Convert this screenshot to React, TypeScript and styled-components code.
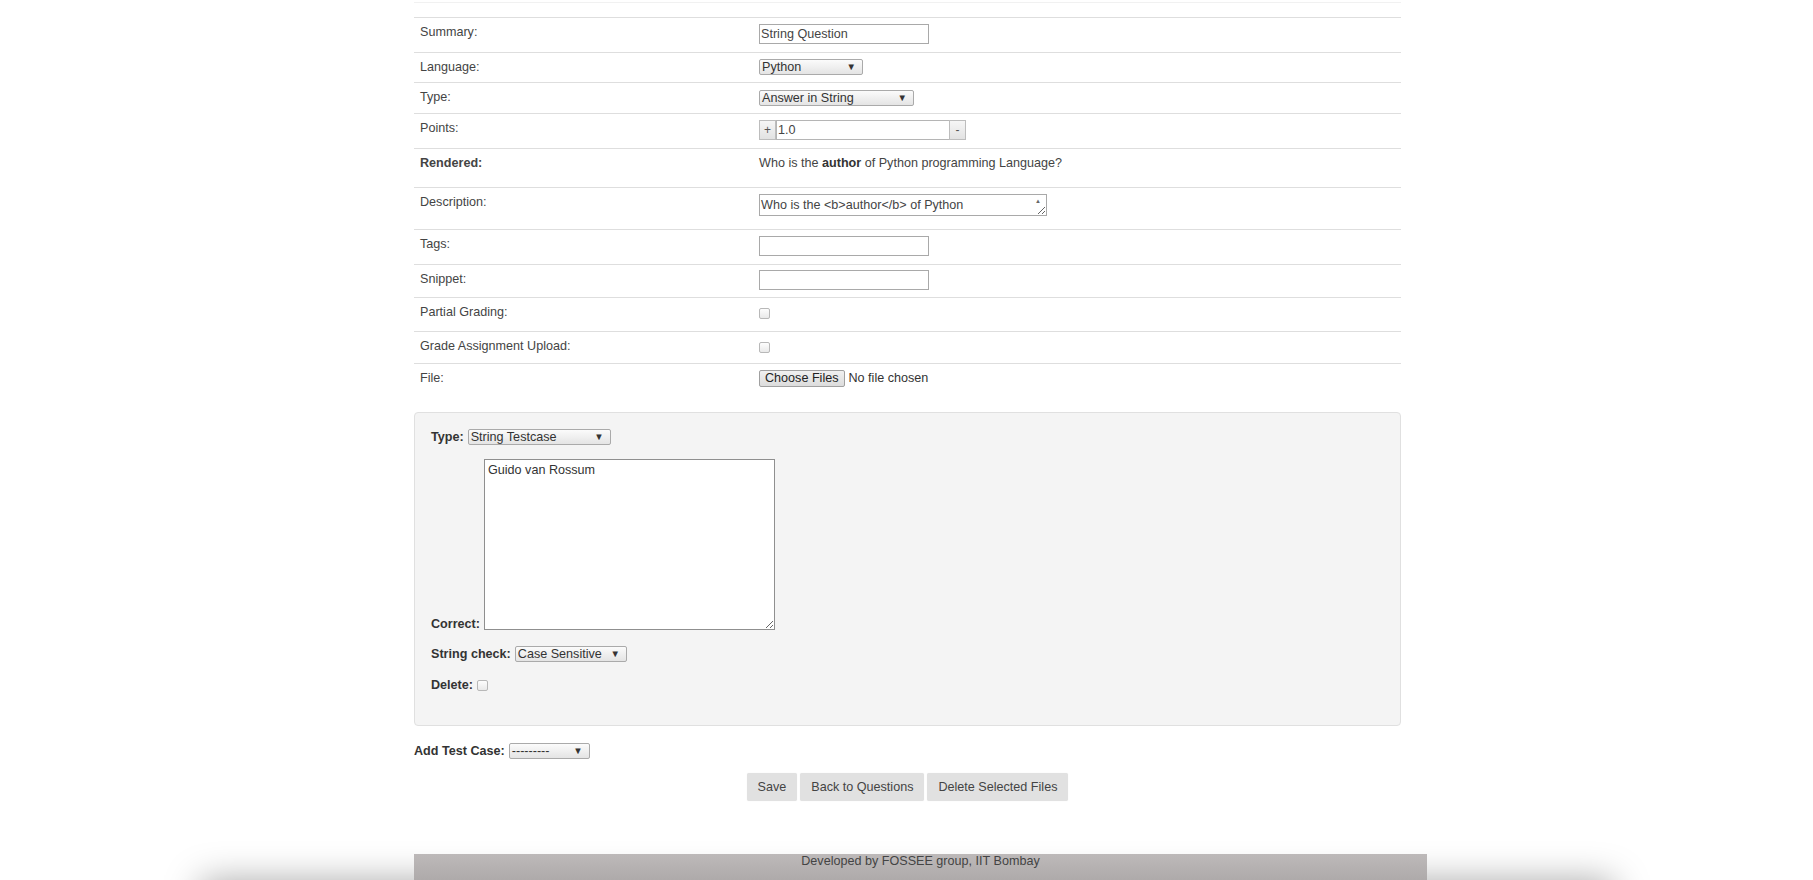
import React from "react";
import styled, { createGlobalStyle } from "styled-components";

const GlobalStyle = createGlobalStyle`
    html, body {
        margin: 0;
        padding: 0;
        background: #ffffff;
    }
    body {
        font-family: "Liberation Sans", Arial, sans-serif;
        font-size: 12.6px;
        color: #333;
        overflow: hidden;
    }
`

const Page = styled.div`
    width: 100%;
`

const Main = styled.div`
    padding-left: 28px;
`

const Container = styled.div`
    width: 1013px;
    margin: 0 auto;
`

const TopRule = styled.div`
    width: 987px;
    height: 2px;
    border-bottom: 1px solid #f1f1f1;
    margin-bottom: 14px;
`

const FormTable = styled.div`
    width: 987px;
`

const Row = styled.div<{ $h: number }>`
    display: grid;
    grid-template-columns: 339px 1fr;
    height: ${({ $h }) => $h}px;
    box-sizing: border-box;
    border-top: 1px solid #dedede;
`

const LabelCell = styled.div<{ $bold?: boolean }>`
    padding: 7px 6px 0;
    line-height: 15px;
    color: #444;
    font-weight: ${({ $bold }) => ($bold ? "bold" : "normal")};
`

const ValueCell = styled.div<{ $top?: number }>`
    padding: ${({ $top }) => $top ?? 6}px 6px 0;
    line-height: 15px;
    color: #444;
    display: flex;
    align-items: flex-start;
`

const TextInput = styled.input<{ $w?: number }>`
    width: ${({ $w }) => $w ?? 170}px;
    height: 20px;
    box-sizing: border-box;
    border: 1px solid #a9a9a9;
    border-radius: 0;
    padding: 0 1px;
    margin: 0;
    font-family: inherit;
    font-size: 12.6px;
    color: #444;
    background: #fff;
    outline: none;
`

const SelectBox = styled.div<{ $w: number }>`
    width: ${({ $w }) => $w}px;
    height: 16px;
    box-sizing: border-box;
    border: 1px solid #aaa;
    border-radius: 2px;
    background: linear-gradient(#fbfbfb, #e4e4e4);
    display: flex;
    align-items: center;
    justify-content: space-between;
    padding: 0 6px 0 2px;
    font-size: 12.6px;
    line-height: 14px;
    color: #333;
    font-weight: normal;
`

const Arrow = styled.span`
    font-size: 9.5px;
    color: #333;
`

const StepButton = styled.span`
    width: 17px;
    height: 20px;
    box-sizing: border-box;
    border: 1px solid #bdbdbd;
    background: linear-gradient(#f6f6f6, #e2e2e2);
    display: flex;
    align-items: center;
    justify-content: center;
    font-size: 12px;
    color: #555;
`

const StepInput = styled(TextInput)`
    border-color: #b5b5b5;
    border-right: none;
    border-left: 1px solid #b5b5b5;
`

const Strong = styled.b`
    color: #333;
`

const DescArea = styled.textarea`
    width: 288px;
    height: 22px;
    box-sizing: border-box;
    border: 1px solid #a9a9a9;
    padding: 2px 22px 0 1px;
    margin: 0;
    font-family: inherit;
    font-size: 12.6px;
    line-height: 16px;
    color: #444;
    resize: both;
    overflow: hidden;
    outline: none;
`

const DescWrap = styled.div`
    position: relative;
`

const ScrollUp = styled.span`
    position: absolute;
    right: 6px;
    top: 0;
    font-size: 6px;
    color: #666;
`

const CheckBox = styled.span<{ $mt?: number }>`
    display: inline-block;
    width: 9px;
    height: 9px;
    margin-top: ${({ $mt }) => $mt ?? 4}px;
    border: 1px solid #b8b8b8;
    border-radius: 2px;
    background: linear-gradient(#fdfdfd, #e9e9e9);
`

const FileButton = styled.span`
    height: 17px;
    box-sizing: border-box;
    border: 1px solid #a0a0a0;
    border-radius: 2px;
    background: linear-gradient(#f0f0f0, #dcdcdc);
    padding: 0 5px;
    display: inline-flex;
    align-items: center;
    color: #222;
    margin-right: 4px;
`

const FileRow = styled.div`
    display: flex;
    align-items: center;
    color: #333;
`

const Panel = styled.div`
    width: 987px;
    box-sizing: border-box;
    margin-top: 12px;
    padding: 16px 16px 32px;
    background: #f4f4f4;
    border: 1px solid #e0e0e0;
    border-radius: 4px;
`

const PanelRow = styled.div<{ $mt?: number; $end?: boolean }>`
    display: flex;
    align-items: ${({ $end }) => ($end ? "flex-end" : "center")};
    gap: 4px;
    margin-top: ${({ $mt }) => $mt ?? 0}px;
    font-weight: bold;
    color: #333;
    line-height: 15px;
`

const CorrectLabel = styled.span`
    margin-bottom: -2px;
`

const AnswerArea = styled.textarea`
    width: 291px;
    height: 171px;
    box-sizing: border-box;
    border: 1px solid #8f8f8f;
    padding: 2px 3px;
    margin: 0;
    font-family: inherit;
    font-size: 12.6px;
    line-height: 16px;
    color: #333;
    background: #fff;
    resize: both;
    outline: none;
`

const AddRow = styled.div`
    display: flex;
    align-items: center;
    gap: 4px;
    margin-top: 17px;
    font-weight: bold;
    color: #333;
`

const ButtonBar = styled.div`
    width: 987px;
    display: flex;
    justify-content: center;
    gap: 3px;
    margin-top: 14px;
`

const ActionButton = styled.button`
    height: 28px;
    padding: 0 11px;
    border: none;
    border-radius: 2px;
    background: #e1e1e1;
    font-family: inherit;
    font-size: 12.6px;
    color: #444;
    box-shadow: 0 0 1px rgba(0, 0, 0, 0.1);
`

const FooterBar = styled.div`
    position: relative;
    z-index: 1;
    margin-top: 53px;
    height: 32px;
    background: linear-gradient(#bdb9b9, #aaa6a6);
    text-align: center;
    line-height: 13px;
    padding-top: 1px;
    color: #444;
`

const Shade = styled.div`
    width: 1400px;
    height: 60px;
    margin: 0 auto;
    background: #fff;
    box-shadow: 0 0 36px 6px rgba(0, 0, 0, 0.35);
`

type Select = { w: number; text: string }

const Dropdown = ({ w, text }: Select) => (
    <SelectBox $w={w}>
        <span>{text}</span>
        <Arrow>▼</Arrow>
    </SelectBox>
)

const App = () => {
    return (
        <Page>
            <GlobalStyle />
            <Main>
                <Container>
                    <TopRule />
                    <FormTable>
                        <Row $h={35}>
                            <LabelCell>Summary:</LabelCell>
                            <ValueCell>
                                <TextInput defaultValue="String Question" />
                            </ValueCell>
                        </Row>
                        <Row $h={30}>
                            <LabelCell>Language:</LabelCell>
                            <ValueCell>
                                <Dropdown w={104} text="Python" />
                            </ValueCell>
                        </Row>
                        <Row $h={31}>
                            <LabelCell>Type:</LabelCell>
                            <ValueCell $top={7}>
                                <Dropdown w={155} text="Answer in String" />
                            </ValueCell>
                        </Row>
                        <Row $h={35}>
                            <LabelCell>Points:</LabelCell>
                            <ValueCell>
                                <StepButton>+</StepButton>
                                <StepInput $w={173} defaultValue="1.0" />
                                <StepButton>-</StepButton>
                            </ValueCell>
                        </Row>
                        <Row $h={39}>
                            <LabelCell $bold>Rendered:</LabelCell>
                            <ValueCell $top={7}>
                                <span>
                                    Who is the <Strong>author</Strong> of Python programming Language?
                                </span>
                            </ValueCell>
                        </Row>
                        <Row $h={42}>
                            <LabelCell>Description:</LabelCell>
                            <ValueCell>
                                <DescWrap>
                                    <DescArea defaultValue="Who is the <b>author</b> of Python programming Language?" />
                                    <ScrollUp>▲</ScrollUp>
                                </DescWrap>
                            </ValueCell>
                        </Row>
                        <Row $h={35}>
                            <LabelCell>Tags:</LabelCell>
                            <ValueCell>
                                <TextInput />
                            </ValueCell>
                        </Row>
                        <Row $h={33}>
                            <LabelCell>Snippet:</LabelCell>
                            <ValueCell $top={5}>
                                <TextInput />
                            </ValueCell>
                        </Row>
                        <Row $h={34}>
                            <LabelCell>Partial Grading:</LabelCell>
                            <ValueCell>
                                <CheckBox />
                            </ValueCell>
                        </Row>
                        <Row $h={32}>
                            <LabelCell>Grade Assignment Upload:</LabelCell>
                            <ValueCell>
                                <CheckBox />
                            </ValueCell>
                        </Row>
                        <Row $h={37}>
                            <LabelCell>File:</LabelCell>
                            <ValueCell>
                                <FileRow>
                                    <FileButton>Choose Files</FileButton>
                                    No file chosen
                                </FileRow>
                            </ValueCell>
                        </Row>
                    </FormTable>

                    <Panel>
                        <PanelRow>
                            Type: <Dropdown w={143} text="String Testcase" />
                        </PanelRow>
                        <PanelRow $mt={14} $end>
                            <CorrectLabel>Correct:</CorrectLabel>
                            <AnswerArea defaultValue="Guido van Rossum" />
                        </PanelRow>
                        <PanelRow $mt={16}>
                            String check: <Dropdown w={112} text="Case Sensitive" />
                        </PanelRow>
                        <PanelRow $mt={16}>
                            Delete: <CheckBox $mt={0} />
                        </PanelRow>
                    </Panel>

                    <AddRow>
                        Add Test Case: <Dropdown w={81} text="---------" />
                    </AddRow>

                    <ButtonBar>
                        <ActionButton>Save</ActionButton>
                        <ActionButton>Back to Questions</ActionButton>
                        <ActionButton>Delete Selected Files</ActionButton>
                    </ButtonBar>

                    <FooterBar>Developed by FOSSEE group, IIT Bombay</FooterBar>
                </Container>
            </Main>
            <Shade />
        </Page>
    )
}

export default App;
